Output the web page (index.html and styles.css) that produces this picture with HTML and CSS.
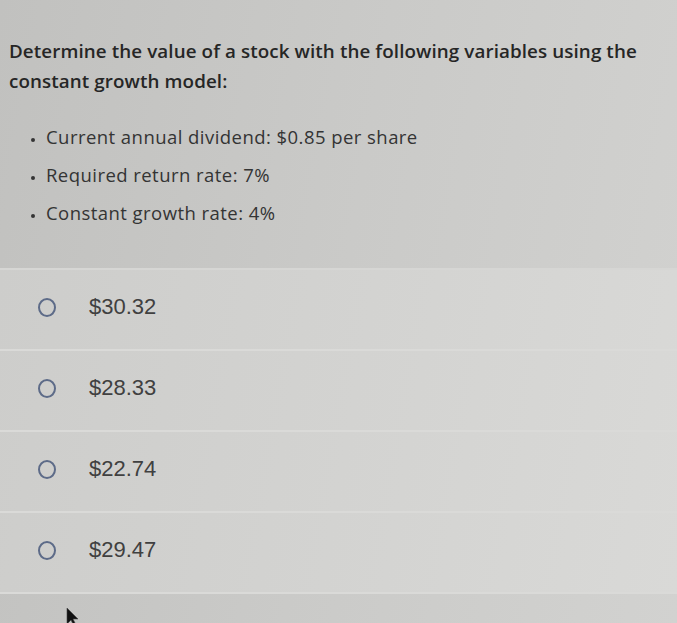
FILE: index.html
```html
<!DOCTYPE html>
<html>
<head>
<meta charset="utf-8">
<link rel="stylesheet" href="styles.css">
</head>
<body>
<div class="page">
  <section class="question">
    <p class="prompt">Determine the value of a stock with the following variables using the constant growth model:</p>
    <ul class="vars">
      <li>Current annual dividend: $0.85 per share</li>
      <li>Required return rate: 7%</li>
      <li>Constant growth rate: 4%</li>
    </ul>
  </section>
  <section class="options">
    <label class="opt"><span class="radio"></span><span class="val">$30.32</span></label>
    <label class="opt"><span class="radio"></span><span class="val">$28.33</span></label>
    <label class="opt"><span class="radio"></span><span class="val">$22.74</span></label>
    <label class="opt"><span class="radio"></span><span class="val">$29.47</span></label>
  </section>
  <svg class="cursor" width="14" height="20" viewBox="0 0 14 20"><path d="M1 1 L1 17 L5 13 L8 19 L10 18 L7 12 L12 12 Z" fill="#111" stroke="#444" stroke-width="0.6"/></svg>
</div>
</body>
</html>
```
FILE: styles.css
```css
html, body {
  margin: 0;
  padding: 0;
}
body {
  width: 677px;
  height: 623px;
  overflow: hidden;
  background: linear-gradient(100deg, #c1c1bf 0%, #cacac8 50%, #d2d2d0 100%);
  font-family: "Open Sans", Lato, sans-serif;
  color: #2c2c2c;
}
.page {
  position: relative;
  height: 623px;
}
.question {
  padding: 36px 10px 0 9px;
  height: 270px;
  box-sizing: border-box;
  border-bottom: 2px solid #d6d6d4;
}
.prompt {
  margin: 0;
  max-width: 650px;
  font-size: 18.8px;
  font-weight: 600;
  letter-spacing: 0.1px;
  line-height: 30px;
  color: #262626;
}
.vars {
  margin: 22px 0 0 0;
  padding: 0 0 0 37px;
  font-size: 18.5px;
  letter-spacing: 0.45px;
  line-height: 38px;
  color: #343434;
}
.vars li::marker {
  font-size: 11px;
}
.options {
  display: flex;
  flex-direction: column;
  background: linear-gradient(100deg, #cdcdcb 0%, #d4d4d2 60%, #d9d9d7 100%);
}
.opt {
  display: flex;
  align-items: center;
  gap: 33px;
  box-sizing: border-box;
  height: 81px;
  padding: 0 0 5px 38px;
  border-bottom: 2px solid #dadad8;
}
.radio {
  width: 14px;
  height: 15px;
  border: 2px solid #5d6b88;
  border-radius: 50%;
  box-sizing: content-box;
}
.val {
  font-family: "Liberation Sans", Arial, sans-serif;
  font-size: 22px;
  color: #404040;
}
.cursor {
  position: absolute;
  left: 66px;
  top: 607px;
}
```
